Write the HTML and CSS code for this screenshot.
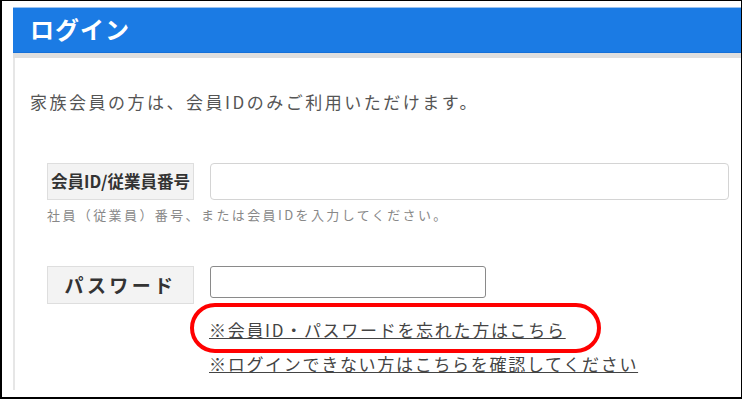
FILE: index.html
```html
<!DOCTYPE html>
<html lang="ja">
<head>
  <meta charset="UTF-8">
  <title>ログイン</title>
  <link rel="stylesheet" href="styles.css">
</head>
<body>

<div class="frame">
  <div class="loginHeader">ログイン</div>
  <div class="loginStrip"></div>

  <div class="loginPanel">
    <p class="intro">家族会員の方は、会員IDのみご利用いただけます。</p>

    <div class="formRow">
      <div class="fieldLabel labelId">会員ID/従業員番号</div>
      <input type="text" class="textInput inputId">
    </div>
    <p class="hint">社員（従業員）番号、または会員IDを入力してください。</p>

    <div class="formRow rowPassword">
      <div class="fieldLabel labelPass">パスワード</div>
      <input type="password" class="textInput inputPass">
    </div>

    <div class="links">
      <div class="linkLine">
        <a href="#">※会員ID・パスワードを忘れた方はこちら</a>
        <span class="circleMark"></span>
      </div>
      <div class="linkLine">
        <a href="#">※ログインできない方はこちらを確認してください</a>
      </div>
    </div>
  </div>
</div>

</body>
</html>
```

FILE: styles.css
```css
html, body {
  margin: 0;
  padding: 0;
  background: #fff;
  font-family: 'Noto Sans CJK JP', 'Noto Sans', sans-serif;
}

.frame {
  box-sizing: border-box;
  width: 742px;
  height: 399px;
  border-top: 1px solid #000;
  border-left: 2px solid #000;
  border-right: 1px solid #000;
  border-bottom: 2px solid #000;
  padding: 6px 0 0 11px;
  overflow: hidden;
}

.loginHeader {
  height: 46px;
  box-sizing: border-box;
  background: #1b7be4;
  border-top: 1px solid #9cc3ef;
  border-bottom: 1px solid #1670d8;
  color: #fff;
  font-size: 24px;
  font-weight: bold;
  letter-spacing: 1px;
  line-height: 42px;
  padding-left: 17px;
}

.loginStrip {
  height: 5px;
  background: #dfdfdf;
}

.loginPanel {
  border-left: 2px solid #e6e6e6;
  padding: 32px 0 0 15px;
  height: 300px;
}

.intro {
  margin: 0;
  font-size: 17px;
  line-height: 24px;
  letter-spacing: 2.5px;
  color: #555;
}

.formRow {
  display: flex;
  align-items: flex-start;
  gap: 16px;
  margin: 49px 0 0 17px;
}

.rowPassword {
  margin-top: 42px;
}

.fieldLabel {
  box-sizing: border-box;
  width: 147px;
  background: #f3f3f3;
  border: 1px solid #dedede;
  color: #333;
  font-weight: bold;
  text-align: center;
}

.labelId {
  height: 37px;
  line-height: 35px;
  font-size: 16.5px;
}

.labelPass {
  height: 38px;
  line-height: 36px;
  font-size: 19px;
  letter-spacing: 3.4px;
}

.textInput {
  box-sizing: border-box;
  margin: 0;
  background: #fff;
  outline: none;
}

.inputId {
  width: 519px;
  height: 37px;
  border: 1px solid #d4d4d4;
  border-radius: 4px;
}

.inputPass {
  width: 276px;
  height: 32px;
  border: 1px solid #8a8a8a;
  border-radius: 3px;
}

.hint {
  margin: 6px 0 0 17px;
  font-size: 13px;
  line-height: 18px;
  letter-spacing: 2.4px;
  color: #888;
}

.links {
  margin: 9px 0 0 179px;
}

.linkLine {
  position: relative;
  line-height: 34px;
  font-size: 17px;
  letter-spacing: 1.7px;
}

.linkLine a {
  color: #444;
  text-decoration: underline;
}

.circleMark {
  position: absolute;
  left: -19px;
  top: -10px;
  width: 411px;
  height: 50px;
  box-sizing: border-box;
  border: 4px solid #f00;
  border-radius: 25px;
}
```
